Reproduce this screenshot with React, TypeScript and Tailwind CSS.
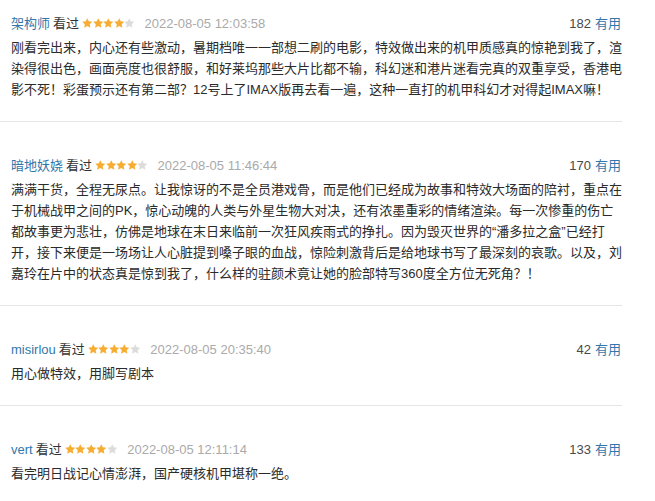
import React from 'react';

type Review = {
  name: string;
  date: string;
  votes: number;
  rating: number;
  lines: string[];
};

const reviews: Review[] = [
  {
    name: '架构师',
    date: '2022-08-05 12:03:58',
    votes: 182,
    rating: 4,
    lines: [
      '刚看完出来，内心还有些激动，暑期档唯一一部想二刷的电影，特效做出来的机甲质感真的惊艳到我了，渲',
      '染得很出色，画面亮度也很舒服，和好莱坞那些大片比都不输，科幻迷和港片迷看完真的双重享受，香港电',
      '影不死！彩蛋预示还有第二部？12号上了IMAX版再去看一遍，这种一直打的机甲科幻才对得起IMAX嘛！',
    ],
  },
  {
    name: '暗地妖娆',
    date: '2022-08-05 11:46:44',
    votes: 170,
    rating: 4,
    lines: [
      '满满干货，全程无尿点。让我惊讶的不是全员港戏骨，而是他们已经成为故事和特效大场面的陪衬，重点在',
      '于机械战甲之间的PK，惊心动魄的人类与外星生物大对决，还有浓墨重彩的情绪渲染。每一次惨重的伤亡',
      '都故事更为悲壮，仿佛是地球在末日来临前一次狂风疾雨式的挣扎。因为毁灭世界的“潘多拉之盒”已经打',
      '开，接下来便是一场场让人心脏提到嗓子眼的血战，惊险刺激背后是给地球书写了最深刻的哀歌。以及，刘',
      '嘉玲在片中的状态真是惊到我了，什么样的驻颜术竟让她的脸部特写360度全方位无死角？！',
    ],
  },
  {
    name: 'misirlou',
    date: '2022-08-05 20:35:40',
    votes: 42,
    rating: 4,
    lines: ['用心做特效，用脚写剧本'],
  },
  {
    name: 'vert',
    date: '2022-08-05 12:11:14',
    votes: 133,
    rating: 4,
    lines: ['看完明日战记心情澎湃，国产硬核机甲堪称一绝。'],
  },
];

const Star = ({ on }: { on: boolean }) => (
  <svg width="10.5" height="10.5" viewBox="0 0 24 24" className="shrink-0">
    <polygon
      points="12,0.5 15.4,7.6 23.5,8.6 17.6,14.1 19.1,22.2 12,18.3 4.9,22.2 6.4,14.1 0.5,8.6 8.6,7.6"
      fill={on ? '#f6ad32' : '#dcdcdc'}
    />
  </svg>
);

const Stars = ({ rating }: { rating: number }) => (
  <span className="flex items-center ml-[3px]">
    {[1, 2, 3, 4, 5].map((i) => (
      <Star key={i} on={i <= rating} />
    ))}
  </span>
);

const ReviewItem = ({ review, first }: { review: Review; first: boolean }) => (
  <div className={`border-b border-[#e6e6e6] pl-[11px] pr-[1px] pb-[21px] ${first ? 'pt-[13px]' : 'pt-[33px]'}`}>
    <div className="flex items-center justify-between h-[21px] text-[13px]">
      <div className="flex items-center">
        <span className="text-[#3377aa]">{review.name}</span>
        <span className="text-[#333] ml-[3px]">看过</span>
        <Stars rating={review.rating} />
        <span className="text-[#aaa] ml-[10px]">{review.date}</span>
      </div>
      <div className="flex items-center">
        <span className="text-[#494949]">{review.votes}</span>
        <span className="text-[#3377aa] ml-[4px]">有用</span>
      </div>
    </div>
    <div className="mt-[3px] text-[13px] leading-[21px] text-[#2b2b2b]">
      {review.lines.map((line, i) => (
        <div key={i} className="whitespace-nowrap">
          {line}
        </div>
      ))}
    </div>
  </div>
);

export default function App() {
  return (
    <div
      className="w-[655px] h-[501px] overflow-hidden bg-white"
      style={{ fontFamily: '"Liberation Sans", "Noto Sans CJK SC", sans-serif' }}
    >
      <div className="w-[622px]">
        {reviews.map((r, i) => (
          <ReviewItem key={r.name} review={r} first={i === 0} />
        ))}
      </div>
    </div>
  );
}
